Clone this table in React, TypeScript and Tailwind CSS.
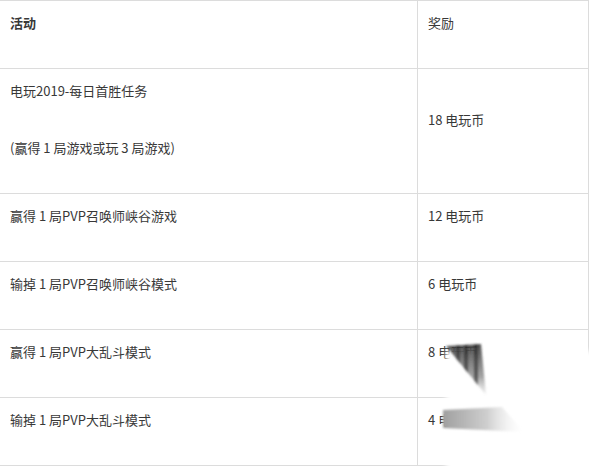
import { Fragment } from "react";

const rows = [
  { left: "赢得 1 局PVP召唤师峡谷游戏", reward: "12 电玩币" },
  { left: "输掉 1 局PVP召唤师峡谷模式", reward: "6 电玩币" },
  { left: "赢得 1 局PVP大乱斗模式", reward: "8 电玩币" },
  { left: "输掉 1 局PVP大乱斗模式", reward: "4 电玩币" },
];

function Cell({ children, bold = false }: { children: React.ReactNode; bold?: boolean }) {
  return (
    <div className="border-b border-r border-[#dcdcdc] flex flex-col justify-center px-[10px]">
      <div className="h-[67px] pt-[12px]">
        <p className={`leading-[19px] ${bold ? "font-bold" : ""}`}>{children}</p>
      </div>
    </div>
  );
}

// the blurred smear over the lower right corner of the screenshot
function Smudge() {
  return (
    <svg className="absolute left-[430px] top-[330px]" width="161" height="137" viewBox="0 0 161 137">
      <defs>
        <filter id="soft" x="-20%" y="-20%" width="140%" height="140%">
          <feGaussianBlur stdDeviation="2.5" />
        </filter>
        <filter id="soft2" x="-20%" y="-20%" width="140%" height="140%">
          <feGaussianBlur stdDeviation="1.2" />
        </filter>
        <clipPath id="tri">
          <polygon points="16,15 51,13 56,64" />
        </clipPath>
        <linearGradient id="dark" x1="0" y1="0" x2="0" y2="1">
          <stop offset="0" stopColor="#3a3a3a" stopOpacity="0.9" />
          <stop offset="0.6" stopColor="#666" stopOpacity="0.6" />
          <stop offset="1" stopColor="#aaa" stopOpacity="0" />
        </linearGradient>
        <linearGradient id="grey" x1="0" y1="0" x2="1" y2="0">
          <stop offset="0" stopColor="#a0a0a0" />
          <stop offset="0.55" stopColor="#cfcfcf" />
          <stop offset="1" stopColor="#f4f4f4" stopOpacity="0" />
        </linearGradient>
      </defs>
      <rect x="16" y="20" width="160" height="130" fill="#fff" filter="url(#soft)" />
      <g filter="url(#soft2)">
        <g clipPath="url(#tri)">
          <rect x="14" y="12" width="44" height="56" fill="url(#dark)" />
          <rect x="26" y="12" width="4" height="40" fill="#222" opacity="0.45" />
          <rect x="34" y="12" width="4" height="45" fill="#222" opacity="0.55" />
          <rect x="44" y="12" width="4" height="50" fill="#222" opacity="0.55" />
        </g>
      </g>
      <polygon points="13,79 72,76 94,101 13,97" fill="url(#grey)" filter="url(#soft2)" />
    </svg>
  );
}

export default function App() {
  return (
    <div className="w-[591px] h-[467px] bg-white text-[#383838] text-[13px] font-['Microsoft_YaHei','Noto_Sans_CJK_SC',sans-serif] overflow-hidden">
      <div className="relative w-[589px] border-t border-[#dcdcdc] grid grid-cols-[418px_171px]">
        <Cell bold>活动</Cell>
        <Cell>奖励</Cell>

        <div className="border-b border-r border-[#dcdcdc] px-[10px] h-[125px]">
          <p className="pt-[12px] leading-[19px]">电玩2019-每日首胜任务</p>
          <p className="mt-[38px] leading-[19px]">(赢得 1 局游戏或玩 3 局游戏)</p>
        </div>
        <Cell>18 电玩币</Cell>

        {rows.map((r) => (
          <Fragment key={r.left}>
            <Cell>{r.left}</Cell>
            <Cell>{r.reward}</Cell>
          </Fragment>
        ))}

        <Smudge />
      </div>
    </div>
  );
}
